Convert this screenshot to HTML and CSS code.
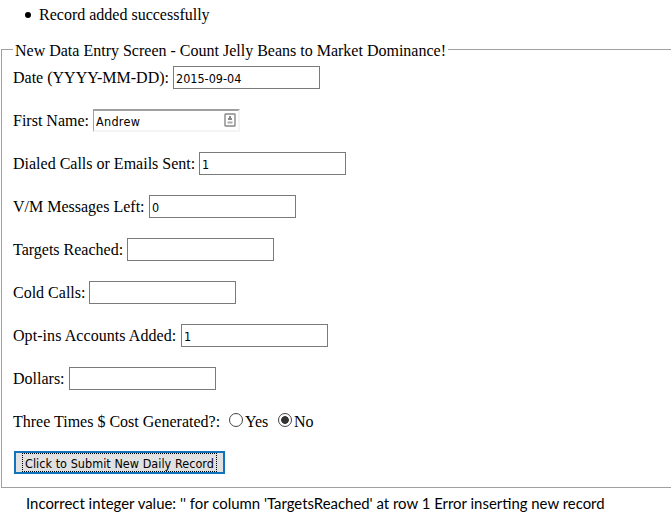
FILE: index.html
```
<!DOCTYPE html>
<html lang="en">
<head>
<meta charset="utf-8">
<title>New Data Entry</title>
<link rel="stylesheet" href="styles.css">
</head>
<body>
<ul class="messages"><li>Record added successfully</li></ul>
<form class="entry">
  <div class="legend"><span>New Data Entry Screen - Count Jelly Beans to Market Dominance!</span></div>
  <div class="row"><label class="date" for="date">Date (YYYY-MM-DD):</label><input id="date" type="text" value="2015-09-04"></div>
  <div class="row"><label class="first" for="first">First Name:</label><div class="autofill"><input id="first" type="text" value="Andrew"><svg width="12" height="14" viewBox="0 0 12 14"><rect x="1" y="1" width="10" height="12" rx=".5" fill="#fff" stroke="#888" stroke-width="1.4"/><path d="M5 3h2v2h1v2H4V5h1z" fill="#888"/><path d="M3.500 9.500h5" stroke="#aaa" stroke-width="2"/></svg></div></div>
  <div class="row"><label class="dialed" for="dialed">Dialed Calls or Emails Sent:</label><input id="dialed" type="text" value="1"></div>
  <div class="row"><label class="vm" for="vm">V/M Messages Left:</label><input id="vm" type="text" value="0"></div>
  <div class="row"><label class="targets" for="targets">Targets Reached:</label><input id="targets" type="text"></div>
  <div class="row"><label class="cold" for="cold">Cold Calls:</label><input id="cold" type="text"></div>
  <div class="row"><label class="optins" for="optins">Opt-ins Accounts Added:</label><input id="optins" type="text" value="1"></div>
  <div class="row"><label class="dollars" for="dollars">Dollars:</label><input id="dollars" type="text"></div>
  <div class="row"><span class="cost">Three Times $ Cost Generated?:</span><label class="choice yes"><input type="radio" name="cost">Yes</label><label class="choice"><input type="radio" name="cost" checked>No</label></div>
  <button type="button"><span>Click to Submit New Daily Record</span></button>
</form>
<p class="error">Incorrect integer value: '' for column 'TargetsReached' at row 1 Error inserting new record</p>
</body>
</html>
```
FILE: styles.css
```
* { box-sizing: border-box; }
body { margin: 0; background: #fff; color: #000; font: 16px/18px "Liberation Serif", serif; overflow: hidden; }
.messages { list-style: none; margin: 6px 0 0; height: 43px; }
.messages { padding-left: 25px; }
.messages li { display: flex; align-items: center; gap: 8px; height: 18px; }
.messages li::before { content: ""; width: 6px; height: 6px; border-radius: 50%; background: #000; }
.entry { margin-left: 1px; height: 439px; border: solid #a0a0a0; border-width: 0 0 1px 1px; padding-left: 11px; }
.legend { display: flex; height: 7px; margin-left: -11px; white-space: nowrap; }
.legend::before { content: ""; width: 11px; border-top: 1px solid #a0a0a0; }
.legend::after { content: ""; flex: 1; border-top: 1px solid #a0a0a0; }
.legend span { width: 435px; padding-left: 2px; margin-top: -7px; }
.row { display: flex; align-items: center; height: 43px; white-space: nowrap; }
.row label, .cost { flex: none; }
.date { width: 160px; }
.first { width: 80px; }
.dialed { width: 186px; }
.vm { width: 136px; }
.targets { width: 114px; }
.cold { width: 76px; }
.optins { width: 168px; letter-spacing: .07px; }
.dollars { width: 56px; }
.cost { width: 216px; }
input[type="text"] { width: 147px; height: 23px; margin: 0; padding: 2px 2px 0; border: 1px solid #7a7a7a; border-radius: 0; outline: 0; background: #fff; color: #000; font: 12.5px "DejaVu Sans Condensed", "DejaVu Sans", sans-serif; font-stretch: condensed; }
.row #first { letter-spacing: .3px; }
.autofill { position: relative; display: flex; }
.autofill input[type="text"] { border: 2px solid; border-color: #a0a0a0 #f4f4f4 #f4f4f4 #a0a0a0; border-left-width: 1px; }
.autofill svg { position: absolute; right: 4px; top: 4px; }
.choice { display: flex; align-items: center; }
.choice.yes { width: 49px; }
input[type="radio"] { appearance: none; width: 14px; height: 14px; margin: -3px 2px 0 0; border: 1px solid #444; border-radius: 50%; background: #fff; }
input[type="radio"]:checked { background: radial-gradient(circle, #333 0 3.5px, #fff 4.2px); }
button { display: block; width: 211px; height: 23px; margin: 8px 0 0 1px; padding: 0 6px; border: 2px solid #1273bd; border-radius: 0; background: #e1e1e1; color: #000; font: 12.5px/19px "DejaVu Sans Condensed", "DejaVu Sans", sans-serif; font-stretch: condensed; letter-spacing: .04px; white-space: nowrap; }
button span { display: block; width: 195px; height: 19px; border: 1px dotted #000; }
.error { margin: 6px 0 0 26px; font: 14.93px/18px Lato, sans-serif; white-space: nowrap; }
```
